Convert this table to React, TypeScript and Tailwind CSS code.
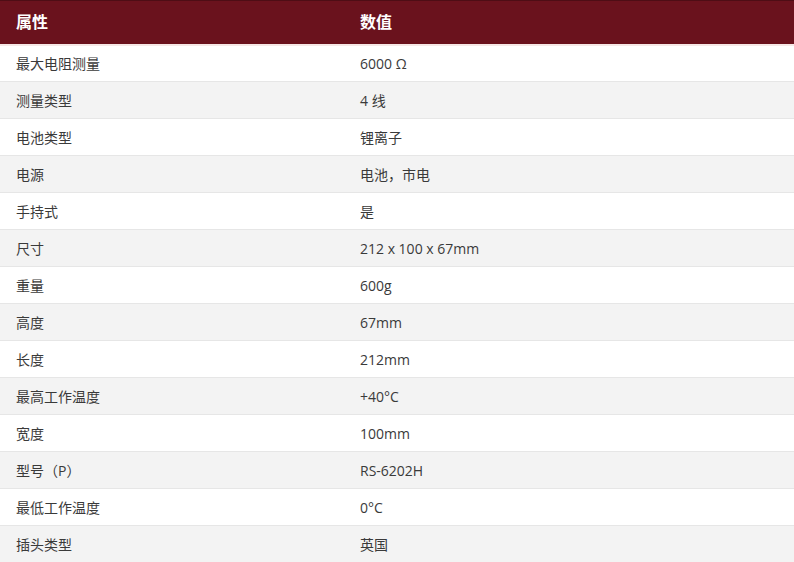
import React from 'react';

const rows: [string, string][] = [
  ['最大电阻测量', '6000 Ω'],
  ['测量类型', '4 线'],
  ['电池类型', '锂离子'],
  ['电源', '电池，市电'],
  ['手持式', '是'],
  ['尺寸', '212 x 100 x 67mm'],
  ['重量', '600g'],
  ['高度', '67mm'],
  ['长度', '212mm'],
  ['最高工作温度', '+40°C'],
  ['宽度', '100mm'],
  ['型号（P）', 'RS-6202H'],
  ['最低工作温度', '0°C'],
  ['插头类型', '英国'],
];

const App: React.FC = () => {
  return (
    <div
      className="w-[794px] h-[562px] overflow-hidden bg-white"
      style={{ fontFamily: '"Open Sans", "Noto Sans CJK SC", sans-serif' }}
    >
      <table className="w-full border-collapse table-fixed">
        <thead>
          <tr className="h-[44px] bg-[#6a121d] border-t border-[#4e0d15] border-b-2 border-b-[#f6e8e6]">
            <th className="w-[344px] pl-4 text-left text-[16px] font-bold text-white">属性</th>
            <th className="pl-4 text-left text-[16px] font-bold text-white">数值</th>
          </tr>
        </thead>
        <tbody>
          {rows.map(([k, v], i) => (
            <tr
              key={k}
              className={`h-[37px] border-b border-[#e6e6e6] ${i % 2 === 0 ? 'bg-white' : 'bg-[#f3f3f3]'}`}
            >
              <td className="pl-4 text-[14px] text-[#3a3a3a]">{k}</td>
              <td className="pl-4 text-[14px] text-[#3a3a3a]">{v}</td>
            </tr>
          ))}
        </tbody>
      </table>
    </div>
  );
};

export default App;
